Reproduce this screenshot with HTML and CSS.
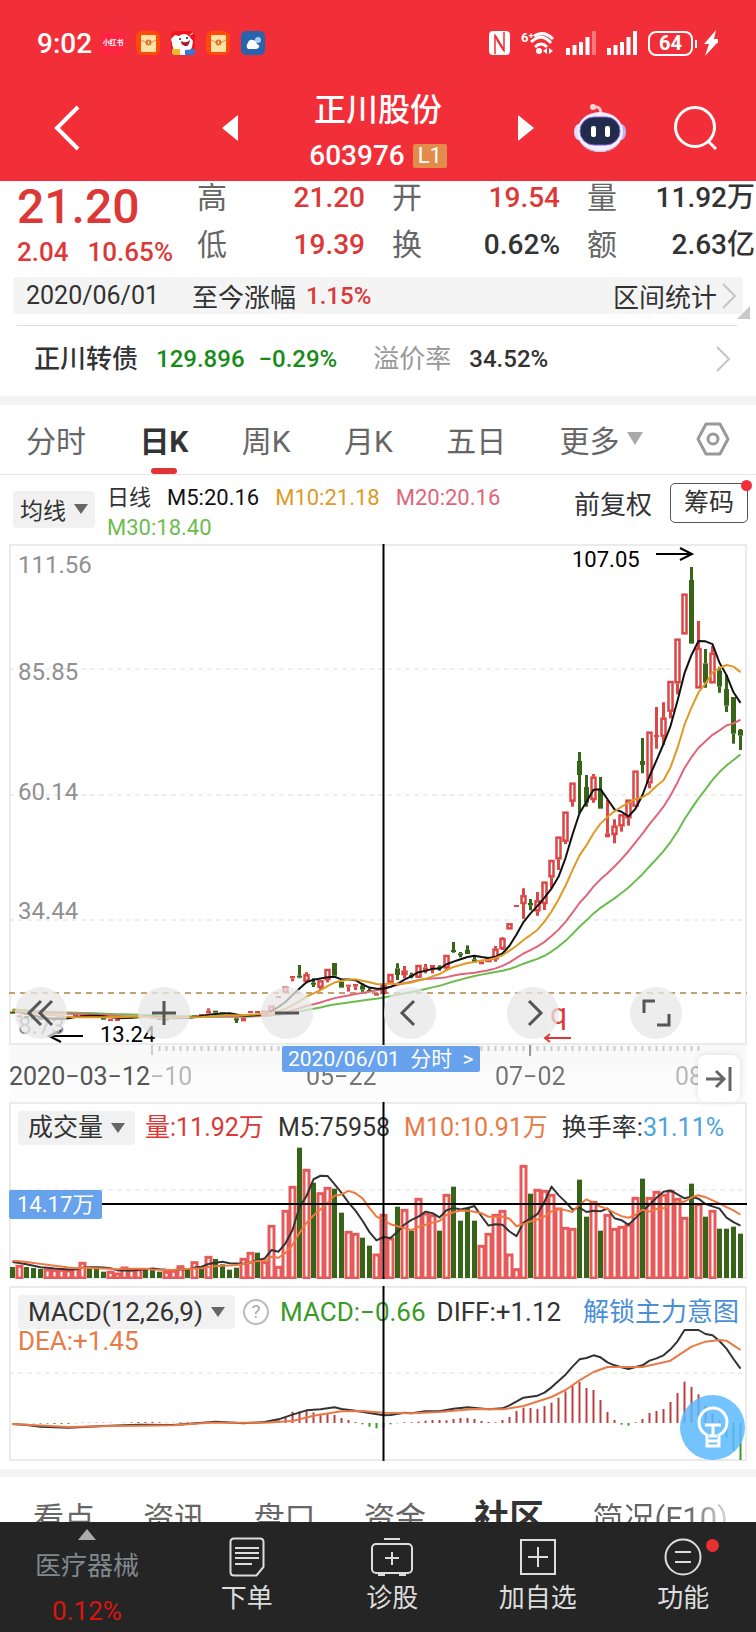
FILE: index.html
```
<!DOCTYPE html>
<html lang="zh-CN">
<head>
    <meta charset="UTF-8">
    <meta name="viewport" content="width=device-width, initial-scale=1.0">
    <title>正川股份 603976</title>
    <link rel="stylesheet" href="styles.css">
</head>
<body>
    <header class="header">
        <div class="status-bar">
            <span class="time">9:02</span>
            <div class="app-icons">
                <span class="app-icon app-note">小红书</span>
                <svg class="app-icon" viewBox="0 0 24 24"><rect width="24" height="24" rx="6" fill="#ff4a08"/><rect x="5" y="4" width="15" height="17" rx="1" fill="#ffe3a6"/><path d="M5 9q7.500 5 15 0" fill="none" stroke="#e08a3c"/><circle cx="12.500" cy="11.500" r="3" fill="#e0762c"/><path d="M12.500 10v3" stroke="#ffe3a6"/></svg>
                <svg class="app-icon" viewBox="0 0 24 24"><rect width="24" height="24" rx="5" fill="#f5141c"/><path d="M1 12L0 8l4-4 4 1q5-4 10 0l4 5-1 6-4 8H3l-1-8z" fill="#fff"/><path d="M10 10q5 3 9-1-1 7-5 6-4-1-4-5z" fill="#a71a2c"/><circle cx="9" cy="8" r="1" fill="#222"/><circle cx="16" cy="7" r="1" fill="#222"/><path d="M19 4l3-2M1 14l4 4" stroke="#fff"/><path d="M1 18h8v6H3q-2 0-2-2z" fill="#f3b62c"/><path d="M14 19l10-1v3q0 3-3 3h-7z" fill="#2e7bdc"/></svg>
                <svg class="app-icon" viewBox="0 0 24 24"><rect width="24" height="24" rx="6" fill="#ff4a08"/><rect x="5" y="4" width="15" height="17" rx="1" fill="#ffe3a6"/><path d="M5 9q7.500 5 15 0" fill="none" stroke="#e08a3c"/><circle cx="12.500" cy="11.500" r="3" fill="#e0762c"/><path d="M12.500 10v3" stroke="#ffe3a6"/></svg>
                <svg class="app-icon" viewBox="0 0 24 24"><rect width="24" height="24" rx="5" fill="#2864ae"/><circle cx="17" cy="9" r="3" fill="#a9cdf2"/><path d="M7 18a4 4 0 0 1 0-6q1-4 5-3 3 0 4 4 3 1 2 3-1 2-3 2z" fill="#fff"/></svg>
            </div>
            <div class="status-icons">
                <svg width="21" height="24" viewBox="0 0 21 24"><rect width="21" height="24" rx="4" fill="#fff"/><path d="M6 23V5l9 15M15 1v18L6 4M8 9l7 11" fill="none" stroke="#f22f38" stroke-width="1.500"/></svg>
                <svg width="34" height="26" viewBox="0 0 34 26"><text x="0" y="12" class="wifi-gen">6⁺</text><g fill="none" stroke="#fff" stroke-width="3"><path d="M13 6Q23 0 32 9M10 12Q21 2 30 13M14 17q6-6 12 0"/></g><circle cx="18" cy="21" r="3" fill="#fff"/><path d="M22 21l4-3v6zM32 21l-4-3v6z" fill="#fff"/></svg>
                <svg width="30" height="24" viewBox="0 0 30 24" fill="#fff"><path d="M0 17h4v7H0zM6.500 14h4v10h-4zM13 11h4v13h-4zM19.500 6h4v18h-4z"/><path d="M26 0h4v24h-4z" opacity=".35"/></svg>
                <svg width="30" height="24" viewBox="0 0 30 24" fill="#fff"><path d="M0 17h4v7H0zM6.500 14h4v10h-4zM13 11h4v13h-4zM19.500 6h4v18h-4zM26 0h4v24h-4z"/></svg>
                <span class="battery">64</span>
                <svg width="14" height="26" viewBox="0 0 14 26"><path d="M12 0L0 14h5L1 26 13 13h2l-1-4h-4z" fill="#fff"/></svg>
            </div>
        </div>
        <div class="app-bar">
            <div class="bar-left">
                <button class="icon-btn" aria-label="返回"><svg width="26" height="46" viewBox="0 0 26 46"><path d="M24 2L3 23l21 21" fill="none" stroke="#fff" stroke-width="4"/></svg></button>
            </div>
            <div class="bar-center">
                <button class="icon-btn" aria-label="上一只"><svg width="16" height="26" viewBox="0 0 16 26"><path d="M16 0v26L0 13z" fill="#fff"/></svg></button>
                <div class="stock-title">
                    <h1>正川股份</h1>
                    <p>603976 <span class="level">L1</span></p>
                </div>
                <button class="icon-btn" aria-label="下一只"><svg width="16" height="26" viewBox="0 0 16 26"><path d="M0 0v26l16-13z" fill="#fff"/></svg></button>
            </div>
            <div class="bar-right">
                <button class="icon-btn" aria-label="助手">
                    <svg width="52" height="50" viewBox="0 0 52 50">
                        <path d="M19 4q8-1 8 6" fill="none" stroke="#ffc3cb" stroke-width="3"/><circle cx="19" cy="4" r="3" fill="#ffd5da"/>
                        <ellipse cx="5" cy="29" rx="5" ry="8" fill="#d9dcff"/><ellipse cx="47" cy="29" rx="5" ry="8" fill="#b9b6f5"/>
                        <ellipse cx="26" cy="29" rx="23" ry="20" fill="#f3eefb"/><path d="M8 41q18 14 36 0-6 8-18 8T8 41z" fill="#c5bff5"/>
                        <rect x="6" y="14" width="40" height="28" rx="14" fill="#232b4c" stroke="#7a62dc" stroke-width="1"/>
                        <rect x="17" y="23" width="5" height="11" rx="2" fill="#fff"/><rect x="31" y="23" width="5" height="11" rx="2" fill="#fff"/>
                    </svg>
                </button>
                <button class="icon-btn" aria-label="搜索"><svg width="44" height="44" viewBox="0 0 44 44" fill="none" stroke="#fff" stroke-width="3"><circle cx="21" cy="21" r="19.500"/><path d="M34 35l8 8"/></svg></button>
            </div>
        </div>
    </header>

    <main class="content">
        <section class="quote">
            <div class="quote-price">
                <strong>21.20</strong>
                <p><span>2.04</span><span>10.65%</span></p>
            </div>
            <dl class="quote-col">
                <div><dt>高</dt><dd class="up">21.20</dd></div>
                <div><dt>低</dt><dd class="up">19.39</dd></div>
            </dl>
            <dl class="quote-col">
                <div><dt>开</dt><dd class="up">19.54</dd></div>
                <div><dt>换</dt><dd>0.62%</dd></div>
            </dl>
            <dl class="quote-col">
                <div><dt>量</dt><dd>11.92万</dd></div>
                <div><dt>额</dt><dd>2.63亿</dd></div>
            </dl>
        </section>

        <div class="range-row">
            <span class="range-date">2020/06/01</span>
            <span>至今涨幅</span>
            <span class="up range-value">1.15%</span>
            <a href="#" class="range-link">区间统计
                <svg width="15" height="26" viewBox="0 0 15 26"><path d="M1 1l12 12L1 25" fill="none" stroke="#c4c4c4" stroke-width="2"/></svg>
            </a>
            <i class="corner"></i>
        </div>

        <a href="#" class="bond-row">
            <span class="bond-name">正川转债</span>
            <span class="down">129.896</span>
            <span class="down">−0.29%</span>
            <span class="bond-label">溢价率</span>
            <span>34.52%</span>
            <svg class="bond-arrow" width="15" height="26" viewBox="0 0 15 26"><path d="M1 1l12 12L1 25" fill="none" stroke="#c4c4c4" stroke-width="2"/></svg>
        </a>

        <nav class="period-tabs">
            <button>分时</button>
            <button class="active">日K</button>
            <button>周K</button>
            <button>月K</button>
            <button>五日</button>
            <button class="more">更多<svg width="16" height="13" viewBox="0 0 16 13"><path d="M0 0h16L8 13z" fill="#aaa"/></svg></button>
            <button aria-label="设置"><svg width="34" height="34" viewBox="0 0 34 34" fill="none" stroke="#999" stroke-width="3"><path d="M10 2h14l8 15-8 15H10L2 17z" stroke-linejoin="round"/><circle cx="17" cy="17" r="5"/></svg></button>
        </nav>

        <div class="ma-row">
            <button class="dropdown">均线<svg width="14" height="10" viewBox="0 0 14 10"><path d="M0 0h14L7 10z" fill="#666"/></svg></button>
            <div class="ma-legend">
                <span>日线</span><span class="ma5">M5:20.16</span><span class="ma10">M10:21.18</span><span class="ma20">M20:20.16</span><span class="ma30">M30:18.40</span>
            </div>
            <button class="adjust">前复权</button>
            <button class="chips">筹码</button>
        </div>

        <section class="panel price-panel">
            <svg class="chart" viewBox="0 0 738 501">
                <g class="grid"><path d="M0 125h738M0 251h738M0 376h738"/></g>
                <g class="scale">
                    <text x="9" y="29">111.56</text><text x="9" y="136">85.85</text><text x="9" y="256">60.14</text><text x="9" y="375">34.44</text><text x="9" y="490">8.73</text>
                </g>
                <path d="M0 449h738" stroke="#c0a373" stroke-width="2" stroke-dasharray="6 5"/>
                <g id="candles"></g>
                <g id="priceLines" class="lines"></g>
                <g class="marks">
                    <text x="563" y="23">107.05</text><path d="M647 10h35M671 4l12 6-12 6"/>
                    <text x="91" y="498">13.24</text><path d="M74 492H41M52 486l-12 6 12 6"/>
                </g>
                <g class="event"><text x="541" y="480">q</text><path d="M562 494h-25M541 490l-5 4 5 4"/></g>
                <path class="cross" d="M374.500 0v501"/>
            </svg>
            <div class="chart-tools">
                <button aria-label="更早"><svg viewBox="0 0 52 52"><path d="M26 14L14 26l12 12M37 14L25 26l12 12"/></svg></button>
                <button aria-label="放大"><svg viewBox="0 0 52 52"><path d="M14 26h24M26 14v24"/></svg></button>
                <button aria-label="缩小"><svg viewBox="0 0 52 52"><path d="M14 26h24"/></svg></button>
                <button aria-label="左移"><svg viewBox="0 0 52 52"><path d="M30 14L18 26l12 12"/></svg></button>
                <button aria-label="右移"><svg viewBox="0 0 52 52"><path d="M22 14l12 12-12 12"/></svg></button>
                <button aria-label="全屏"><svg viewBox="0 0 52 52"><path d="M14 26V14h11M39 27v11H27"/></svg></button>
            </div>
        </section>

        <div class="axis">
            <svg class="chart" viewBox="0 0 738 57">
                <path id="ticks" d="M143 0v10" stroke="#ccc" stroke-width="2"/>
                <path d="M521 0v11" stroke="#999" stroke-width="2"/>
                <g class="dates">
                    <text x="0" y="40">2020−03−12</text><text x="141" y="40" opacity=".4">−10</text><text x="297" y="40" opacity=".8">05−22</text><text x="486" y="40" opacity=".8">07−02</text><text x="666" y="40" opacity=".4">08</text>
                </g>
            </svg>
            <a href="#" class="day-tag">2020/06/01&nbsp; 分时&nbsp; &gt;</a>
            <button class="to-end" aria-label="最新"><svg width="26" height="24" viewBox="0 0 26 24" fill="none" stroke="#666" stroke-width="3"><path d="M0 12h18M10 4l8 8-8 8M24 0v24"/></svg></button>
        </div>

        <section class="panel">
            <div class="legend">
                <button class="dropdown">成交量<svg width="14" height="10" viewBox="0 0 14 10"><path d="M0 0h14L7 10z" fill="#666"/></svg></button>
                <span class="up">量:11.92万</span><span>M5:75958</span><span class="orange">M10:10.91万</span><span>换手率:<b>31.11%</b></span>
            </div>
            <svg class="chart" viewBox="0 0 738 177">
                <g class="grid"><path d="M0 88h738"/></g>
                <g id="volumes"></g>
                <g id="volumeLines" class="lines"></g>
                <path class="cross" d="M0 102h738M374.500 0v177"/>
            </svg>
            <span class="value-tag">14.17万</span>
        </section>

        <section class="panel macd-panel">
            <div class="legend macd-legend">
                <button class="dropdown">MACD(12,26,9)<svg width="14" height="10" viewBox="0 0 14 10"><path d="M0 0h14L7 10z" fill="#666"/></svg></button>
                <button class="help" aria-label="说明">?</button>
                <span class="macd-value">MACD:−0.66</span><span>DIFF:+1.12</span>
                <a href="#">解锁主力意图</a>
                <span class="orange dea">DEA:+1.45</span>
            </div>
            <svg class="chart" viewBox="0 0 738 175">
                <g class="grid"><path d="M0 87h738"/></g>
                <g id="macdBars"></g>
                <g id="macdLines" class="lines"></g>
                <path class="cross" d="M374.500 0v175"/>
            </svg>
            <button class="bulb" aria-label="提示"><svg width="34" height="44" viewBox="0 0 34 44" fill="none" stroke="#fff" stroke-width="3"><path d="M11 34V29Q3 25 3 16a14 14 0 0 1 28 0q0 9-8 13v11H11zM11 35h12M9 19h16M17 19v12M13 30h8"/></svg></button>
        </section>

        <nav class="info-tabs">
            <button>看点</button>
            <button>资讯</button>
            <button>盘口</button>
            <button>资金</button>
            <button class="active">社区</button>
            <button class="fade">简况(F10)</button>
        </nav>
    </main>

    <footer class="bottom-bar">
        <button class="sector">
            <svg width="18" height="11" viewBox="0 0 18 11"><path d="M9 0l9 11H0z" fill="#aaa"/></svg>
            <span>医疗器械</span>
            <em>0.12%</em>
        </button>
        <button>
            <svg width="36" height="40" viewBox="0 0 36 40"><path d="M5 1.500h26q3.500 0 3.500 3.500v25l-7 8.500H5Q1.500 38.500 1.500 35V5Q1.500 1.500 5 1.500zM6 11h24M6 16h24M6 21h24M6 27h17"/></svg>
            下单
        </button>
        <button>
            <svg width="42" height="40" viewBox="0 0 42 40"><rect x="1" y="7" width="40" height="29" rx="4"/><path d="M13 2h16M21 15v13M14 21h14M7 38h7M28 38h7"/></svg>
            诊股
        </button>
        <button>
            <svg width="36" height="40" viewBox="0 0 36 40"><rect x="1" y="3" width="34" height="34"/><path d="M18 10v20M8 20h20"/></svg>
            加自选
        </button>
        <button class="has-dot">
            <svg width="38" height="40" viewBox="0 0 38 40"><circle cx="19" cy="20" r="17.500"/><path d="M11 15h16M11 25h16"/></svg>
            功能
        </button>
    </footer>
    <script src="chart.js"></script>
</body>
</html>
```
FILE: styles.css
```
* {
    box-sizing: border-box;
}

body {
    margin: 0;
    height: 100vh;
    display: flex;
    flex-direction: column;
    font-family: Roboto, "Noto Sans CJK SC", sans-serif;
    font-size: 24px;
    color: #333;
    background-color: #fff;
}

button {
    border: none;
    background: none;
    padding: 0;
    margin: 0;
    font: inherit;
    color: inherit;
    white-space: nowrap;
    cursor: pointer;
}

a {
    color: inherit;
    text-decoration: none;
}

svg {
    display: block;
    flex: none;
}

h1, p, dl, dd {
    margin: 0;
}

.up {
    color: #dc3838;
}

.down {
    color: #188c18;
}

/* Header */
.header {
    flex: none;
    background-color: #f22f38;
    color: #fff;
    padding-bottom: 11px;
}

.status-bar {
    display: flex;
    align-items: center;
    height: 86px;
    padding: 0 38px 0 37px;
}

.time {
    font-size: 28px;
    font-weight: 500;
}

.app-icons {
    display: flex;
    gap: 11px;
    margin-left: 9px;
}

.app-icon {
    width: 24px;
    height: 24px;
}

.app-note {
    background-color: #ff2442;
    border-radius: 6px;
    font-size: 7px;
    font-weight: bold;
    line-height: 24px;
    text-align: center;
    white-space: nowrap;
}

.status-icons {
    display: flex;
    align-items: center;
    gap: 11px;
    margin-left: auto;
}

.wifi-gen {
    font-size: 13px;
    font-weight: bold;
    fill: #fff;
}

.battery {
    position: relative;
    width: 45px;
    height: 25px;
    border: 2px solid #fff;
    border-radius: 8px;
    font-size: 20px;
    font-weight: bold;
    line-height: 21px;
    text-align: center;
}

.battery::after {
    content: "";
    position: absolute;
    right: -6px;
    top: 7px;
    width: 2px;
    height: 8px;
    background-color: #fff;
}

.app-bar {
    display: grid;
    grid-template-columns: 1fr auto 1fr;
    align-items: center;
    height: 84px;
}

.bar-left,
.bar-right {
    display: flex;
    align-items: center;
}

.bar-left {
    padding-left: 54px;
}

.bar-right {
    justify-content: flex-end;
    gap: 48px;
    padding-right: 38px;
}

.bar-center {
    display: flex;
    align-items: center;
    gap: 71px;
    height: 84px;
}

.stock-title {
    padding-top: 10px;
    text-align: center;
    line-height: 45px;
}

.stock-title h1 {
    font-size: 32px;
    font-weight: 500;
}

.stock-title p {
    font-size: 28px;
    font-weight: 500;
    display: flex;
    align-items: center;
    gap: 8px;
}

.level {
    background-color: #e38b4b;
    border-radius: 2px;
    width: 34px;
    font-size: 22px;
    font-weight: normal;
    line-height: 24px;
}

/* Quote */
.content {
    flex: 1;
    min-height: 0;
    overflow: hidden;
}

.quote {
    display: flex;
    gap: 27px;
    height: 96px;
    padding-right: 1px;
}

.quote-price {
    flex: none;
    width: 170px;
    padding-left: 17px;
    color: #dc3838;
}

.quote-price strong {
    display: block;
    font-size: 48px;
    font-weight: 500;
    line-height: 52px;
}

.quote-price p {
    display: flex;
    gap: 19px;
    font-size: 26px;
    font-weight: 500;
    line-height: 38px;
}

.quote-col {
    flex: 1;
    font-size: 28px;
}

.quote-col div {
    display: flex;
    justify-content: space-between;
    line-height: 47px;
    margin-top: -7px;
    margin-bottom: 7px;
    white-space: nowrap;
}

.quote-col dt {
    font-size: 30px;
    color: #666;
}

.quote-col dd {
    font-weight: 500;
}

.range-row {
    position: relative;
    display: flex;
    align-items: center;
    height: 37px;
    margin: 0 13px;
    padding: 0 6px 0 13px;
    background-color: #f4f4f4;
    border-radius: 4px;
    font-size: 26px;
}

.range-date {
    margin-right: 33px;
    font-size: 25px;
}

.range-value {
    margin-left: 10px;
    font-size: 24px;
    font-weight: 500;
}

.range-link {
    display: flex;
    align-items: center;
    gap: 5px;
    margin-left: auto;
}

.corner {
    position: absolute;
    right: -7px;
    bottom: -5px;
    border-left: 13px solid transparent;
    border-bottom: 13px solid #c8c8c8;
}

.bond-row {
    display: flex;
    align-items: center;
    height: 71px;
    margin: 11px 19px 0 17px;
    padding: 0 6px 4px 17px;
    border-top: 1px solid #ddd;
    font-weight: 500;
    line-height: 32px;
}

.bond-name {
    font-size: 26px;
    margin-right: 18px;
}

.down + .down {
    margin-left: 14px;
}

.bond-label {
    margin: 0 18px 0 36px;
    font-size: 26px;
    font-weight: normal;
    color: #999;
}

.bond-arrow {
    margin-left: auto;
}

/* Period tabs */
.period-tabs {
    display: flex;
    justify-content: space-between;
    height: 79px;
    padding: 0 26px;
    border-top: 9px solid #f4f4f4;
    border-bottom: 1px solid #e4e4e4;
    font-size: 30px;
    color: #666;
}

.period-tabs button {
    position: relative;
    padding-bottom: 2px;
}

.period-tabs .active {
    font-weight: bold;
    color: #333;
}

.period-tabs .active::after {
    content: "";
    position: absolute;
    left: 50%;
    bottom: 0;
    width: 26px;
    height: 6px;
    margin-left: -13px;
    border-radius: 3px;
    background-color: #e03434;
}

.more {
    display: flex;
    align-items: center;
    gap: 7px;
}

.ma-row {
    display: flex;
    align-items: flex-start;
    height: 69px;
    padding: 8px 8px 0 13px;
}

.dropdown {
    display: flex;
    align-items: center;
    gap: 8px;
    height: 34px;
    padding: 0 10px;
    border-radius: 4px;
    background-color: #f1f1f1;
}

.ma-row .dropdown {
    height: 37px;
    margin-top: 8px;
    padding: 0 7px 1px;
    font-size: 23px;
}

.ma-legend {
    flex: 1;
    display: flex;
    flex-wrap: wrap;
    column-gap: 16px;
    padding-left: 12px;
    font-size: 22px;
    line-height: 30px;
}

.ma5 {
    color: #111;
}

.ma10 {
    color: #dd9a25;
}

.ma20 {
    color: #e0657a;
}

.ma30 {
    color: #6cbc50;
}

.adjust {
    margin-right: 18px;
    font-size: 26px;
    line-height: 44px;
}

.chips {
    position: relative;
    width: 78px;
    height: 40px;
    border: 1px solid #555;
    border-radius: 5px;
    font-size: 25px;
    line-height: 38px;
}

.chips::after {
    content: "";
    position: absolute;
    top: -4px;
    right: -5px;
    width: 11px;
    height: 11px;
    border-radius: 50%;
    background-color: #f2303c;
}

/* Charts */
.panel,
.axis {
    position: relative;
    margin: 0 9px;
}

.panel {
    box-shadow: inset 0 0 0 2px #ebebeb;
}

.chart {
    position: relative;
    width: 100%;
    height: auto;
    pointer-events: none;
}

.grid {
    stroke: #e0e0e0;
    stroke-dasharray: 5 4;
}

.scale text {
    font-size: 24px;
    fill: #909090;
}

.lines {
    fill: none;
    stroke-width: 2;
    stroke-linejoin: round;
}

.marks text {
    font-size: 22px;
    fill: #000;
}

.marks path {
    fill: none;
    stroke: #000;
    stroke-width: 2;
}

.event text {
    font-size: 30px;
    fill: #dc3838;
}

.event path {
    fill: none;
    stroke: #dc3838;
    stroke-width: 2;
}

.cross {
    stroke: #000;
    stroke-width: 2;
}

.chart-tools {
    position: absolute;
    left: 6px;
    right: 65px;
    bottom: 6px;
    display: flex;
    justify-content: space-between;
}

.chart-tools button {
    width: 52px;
    height: 52px;
    border-radius: 50%;
    background-color: rgba(231, 231, 231, 0.75);
}

.chart-tools path {
    fill: none;
    stroke: #555;
    stroke-width: 3;
}

.axis {
    background: linear-gradient(#f8f8f8, #fdfdfd);
}

.dates text {
    font-size: 25px;
    fill: #555;
}

.day-tag {
    position: absolute;
    left: 273px;
    top: 1px;
    padding: 0 6px;
    border-radius: 2px;
    background-color: #68a2ec;
    color: #fff;
    font-size: 21px;
    line-height: 26px;
}

.to-end {
    position: absolute;
    right: 7px;
    top: 10px;
    display: grid;
    place-items: center;
    width: 42px;
    height: 47px;
    border-radius: 8px;
    background-color: #fff;
    box-shadow: 0 0 6px rgba(0, 0, 0, 0.12);
}

.legend {
    position: absolute;
    left: 9px;
    right: 9px;
    top: 9px;
    display: flex;
    align-items: center;
    gap: 14px;
    font-size: 25px;
    line-height: 34px;
    white-space: nowrap;
}

.legend .dropdown {
    margin-right: -4px;
}

.legend b {
    font-weight: normal;
    color: #4aa3df;
}

.orange {
    color: #e87a46;
}

.value-tag {
    position: absolute;
    left: 0;
    top: 88px;
    padding: 0 8px;
    border-radius: 2px;
    background-color: #68a2ec;
    color: #fff;
    font-size: 22px;
    line-height: 29px;
}

.macd-panel {
    margin-top: 7px;
}

.macd-legend {
    flex-wrap: wrap;
    gap: 0 11px;
    right: 8px;
    font-size: 26px;
}

.macd-legend .dropdown {
    margin-right: -3px;
}

.macd-legend a {
    margin-left: auto;
    color: #4a8ed8;
}

.macd-value {
    color: #3a9a28;
}

.help {
    width: 26px;
    height: 26px;
    border: 2px solid #bbb;
    border-radius: 50%;
    font-size: 19px;
    line-height: 22px;
    color: #aaa;
}

.dea {
    width: 100%;
    line-height: 24px;
}

.bulb {
    position: absolute;
    right: 2px;
    bottom: 1px;
    display: grid;
    place-items: center;
    width: 65px;
    height: 65px;
    border-radius: 50%;
    background-color: rgba(91, 185, 255, 0.85);
}

/* Info tabs */
.info-tabs {
    display: flex;
    justify-content: space-between;
    margin-top: 8px;
    padding: 20px 28px 0 33px;
    border-top: 8px solid #f4f4f4;
    font-size: 31px;
    line-height: 44px;
    color: #666;
}

.info-tabs .active {
    font-size: 35px;
    font-weight: bold;
    color: #333;
}

.fade {
    background: linear-gradient(90deg, #666 70%, #ddd);
    background-clip: text;
    color: transparent;
}

/* Bottom bar */
.bottom-bar {
    flex: none;
    display: flex;
    height: 110px;
    background-color: #252525;
    color: #ddd;
    font-size: 26px;
}

.bottom-bar button {
    flex: 1;
    display: flex;
    flex-direction: column;
    align-items: center;
    padding-top: 15px;
    line-height: 42px;
}

.bottom-bar button:not(.sector) svg {
    fill: none;
    stroke: #ddd;
    stroke-width: 2;
}

.bottom-bar .sector {
    flex: none;
    width: 23%;
    padding-top: 7px;
    color: #7f888e;
    line-height: 52px;
}

.sector em {
    font-style: normal;
    line-height: 38px;
    color: #dc1410;
}

.has-dot {
    position: relative;
}

.has-dot::after {
    content: "";
    position: absolute;
    top: 17px;
    left: 50%;
    width: 13px;
    height: 13px;
    margin-left: 23px;
    border-radius: 50%;
    background-color: #e83030;
}
```
FILE: chart.js
```
const STEP = 7;      // distance between two bars
const FIRST = 3.5;   // centre of the first bar
const UNIT = 3;      // data units per chart unit
const RED = '#dc4646';
const GREEN = '#376518';

const x = i => FIRST + i * STEP;

// [up, body top, body bottom, high, low]
const candles = [
    [0,1403,1409],[1,1414,1419],[0,1416,1422],[0,1420,1426],[0,1422,1427],[1,1424,1429],[1,1423,1429],[1,1421,1426],[1,1418,1424],[1,1410,1416],
    [1,1410,1416],[0,1413,1417],[0,1416,1421],[0,1421,1425],[1,1424,1431],[1,1425,1431],[1,1416,1423],[1,1417,1421],[1,1415,1420],[0,1416,1419],
    [0,1418,1421],[0,1421,1428],[0,1423,1427],[1,1418,1423],[1,1416,1420],[0,1415,1418],[0,1413,1418],[1,1410,1416],[1,1400,1408,1393],[0,1400,1405],
    [0,1405,1409],[0,1410,1414],[0,1423,1428,1418,1437],[1,1422,1432],[1,1401,1406],[1,1401,1406],[1,1400,1413],[1,1385,1403],[1,1356,1361],[1,1328,1346],
    [1,1296,1303,1296,1312],[0,1295,1301,1263,1303],[1,1291,1313,1285,1318],[0,1316,1321,1303,1329],[1,1309,1331,1309,1338],[1,1275,1308,1275,1315],[0,1257,1295],[0,1313,1331],[1,1322,1328,1322,1343],[1,1320,1328,1320,1338],
    [0,1325,1337,1318,1343],[0,1338,1344,1333],[1,1348,1355],[1,1323,1350],[1,1290,1316],[0,1273,1293,1258,1308],[1,1280,1293,1266,1303],[0,1292,1297,1286,1303],[1,1263,1301],[1,1270,1280,1260,1288],
    [1,1263,1275,1263,1288],[0,1268,1275,1264,1280],[1,1233,1273,1233,1278],[0,1218,1224,1194,1226],[0,1228,1233,1224,1240],[0,1218,1230,1204],[0,1246,1255,1236,1256],[1,1252,1261],[1,1240,1254],[1,1214,1246,1206,1253],
    [1,1182,1215,1180,1218],[1,1138,1156],[1,1083,1089],[1,1054,1080,1033,1124],[0,1077,1084,1065,1099],[1,1069,1102,1044,1115],[1,1013,1080,1013,1098],[1,948,1000,948,1033],[1,878,946,878,978],[1,803,893,803,900],
    [1,716,773,716,788],[0,651,693,624,808],[0,729,776,693,788],[1,698,768,690,776],[0,738,794,699],[1,868,880,768],[1,845,873,826,898],[1,811,847,811,863],[1,767,823,767,845],[1,680,788],
    [0,651,663,582,688],[1,563,718,563,733],[1,573,579,489,614],[1,521,578,475,603],[1,411,503,411,523],[1,284,418,284,451],[1,149,271],[0,108,299,69],[1,312,433,231],[0,358,416,315,431],
    [1,326,418,306],[0,380,428,368,446],[0,435,485,393,504],[0,459,569,459,599],[0,558,575,555,618]
];

// positive = up day, negative = down day
const volumes = [
    -33,38,-33,-30,-27,27,25,26,24,30,47,-33,-27,-19,20,15,33,27,27,-30,-27,-19,20,23,37,-27,49,-32,65,-57,-41,-25,-31,59,77,
    -76,49,158,35,203,275,-391,326,-286,256,272,-268,-196,140,134,-121,-97,72,191,120,-214,206,-142,239,195,190,-142,251,-274,-172,-210,-172,98,134,191,
    203,72,28,338,-253,266,263,251,210,152,149,-295,-184,230,-142,191,149,155,161,242,-298,242,260,251,263,239,182,-283,223,-184,203,-148,-148,-154,-133
];

const macd = [
    0,0,-1,-1,-2,-2,-3,-3,-3,-1,1,1,1,1,1,0,1,2,3,3,3,2,1,1,2,2,1,1,3,4,3,1,1,1,1,
    1,3,5,8,17,34,35,38,32,28,27,24,15,9,3,-4,-11,-16,-14,-4,-1,2,2,4,7,9,9,8,12,15,15,12,6,3,
    2,9,18,36,46,45,42,51,61,76,95,112,123,105,99,69,33,9,-5,-8,2,12,30,36,42,63,90,124,108,86,52,27,7,-45,-83,-111
];

// [bar, y] key points of both MACD lines
const diff = [[0,414],[2,417],[4,422],[8,425],[13,420],[18,416],[23,417],[29,407],[33,412],[36,408],[38,400],[40,386],[42,373],[44,370],[46,364],[47,369],[49,374],[51,381],[53,388],[54,387],[56,380],[57,382],[59,376],[61,376],[63,368],[65,364],[68,370],[70,367],[71,358],[73,335],[75,329],[76,320],[77,304],[78,285],[79,266],[80,242],[81,220],[82,216],[83,208],[84,214],[85,229],[86,238],[87,244],[88,249],[89,243],[90,238],[91,224],[92,217],[93,208],[94,190],[95,166],[96,132],[98,132],[99,144],[100,148],[101,165],[102,188],[103,219],[104,248]];
const dea = [[0,414],[8,423],[14,420],[18,419],[23,418],[28,410],[36,410],[40,405],[43,389],[47,376],[50,375],[53,380],[57,382],[61,378],[66,369],[70,370],[73,360],[77,333],[79,312],[81,283],[83,258],[85,243],[90,243],[94,224],[97,182],[99,167],[101,162],[102,164],[103,178],[104,192]];

function add(id, tag, attrs) {
    const el = document.createElementNS('http://www.w3.org/2000/svg', tag);
    for (const key in attrs) {
        el.setAttribute(key, attrs[key]);
    }
    document.getElementById(id).appendChild(el);
}

function drawLine(id, points, color) {
    add(id, 'polyline', { points: points.map(p => x(p[0]) + ',' + p[1]).join(' '), stroke: color });
}

// average of the last n values; history stands before the first bar
function average(values, history, n) {
    const all = history.concat(values);
    return values.map((v, i) => {
        const end = i + history.length + 1;
        return all.slice(end - n, end).reduce((a, b) => a + b, 0) / n;
    });
}

candles.forEach(([up, top, bottom, high = top, low = bottom], i) => {
    const color = up ? RED : GREEN;
    const h = (bottom - top) / UNIT;
    add('candles', 'path', { d: `M${x(i)} ${high / UNIT}V${top / UNIT}M${x(i)} ${bottom / UNIT}V${low / UNIT}`, stroke: color, 'stroke-width': 3 });
    if (up && h > 4) {
        add('candles', 'rect', { x: x(i) - 2, y: top / UNIT + 1, width: 4, height: h - 2, fill: '#fff', stroke: color, 'stroke-width': 2.5 });
    } else {
        add('candles', 'rect', { x: x(i) - 2.5, y: top / UNIT, width: 5, height: Math.max(h, 2), fill: color });
    }
});

const closes = candles.map(c => c[0] ? c[1] : c[2]);
const before = Array(10).fill(1388).concat(Array(20).fill(1400));
[[30, '#6cbc50'], [20, '#e0657a'], [5, '#111'], [10, '#dd9a25']].forEach(([n, color]) => {
    drawLine('priceLines', average(closes, before, n).map((y, i) => [i, y / UNIT]), color);
});

volumes.forEach((v, i) => {
    const h = Math.abs(v) / UNIT;
    if (v > 0) {
        add('volumes', 'rect', { x: x(i) - 2.5, y: 177 - h, width: 5, height: h - 1, fill: '#fff', stroke: '#e85a5a', 'stroke-width': 3 });
    } else {
        add('volumes', 'rect', { x: x(i) - 2.5, y: 176 - h, width: 5, height: h, fill: GREEN });
    }
});

const sizes = volumes.map(Math.abs);
const sizesBefore = [56, 56, 56, 56, 56, 52, 52, 52, 51];
drawLine('volumeLines', average(sizes, sizesBefore, 5).map((v, i) => [i, 176 - v / UNIT]), '#333');
drawLine('volumeLines', average(sizes, sizesBefore, 10).map((v, i) => [i, 176 - v / UNIT]), '#f07840');

macd.forEach((v, i) => {
    add('macdBars', 'path', { d: `M${x(i)} 137v${-v / UNIT}`, stroke: v > 0 ? '#b84040' : '#3a9a28', 'stroke-width': 2 });
});
drawLine('macdLines', diff.map(p => [p[0], p[1] / UNIT]), '#333');
drawLine('macdLines', dea.map(p => [p[0], p[1] / UNIT]), '#e87a46');

// small day marks on the time axis
let ticks = 'M143 0v10';
for (let i = 21; i < 99; i++) {
    ticks += `M${x(i)} 1v5`;
}
document.getElementById('ticks').setAttribute('d', ticks);
```
